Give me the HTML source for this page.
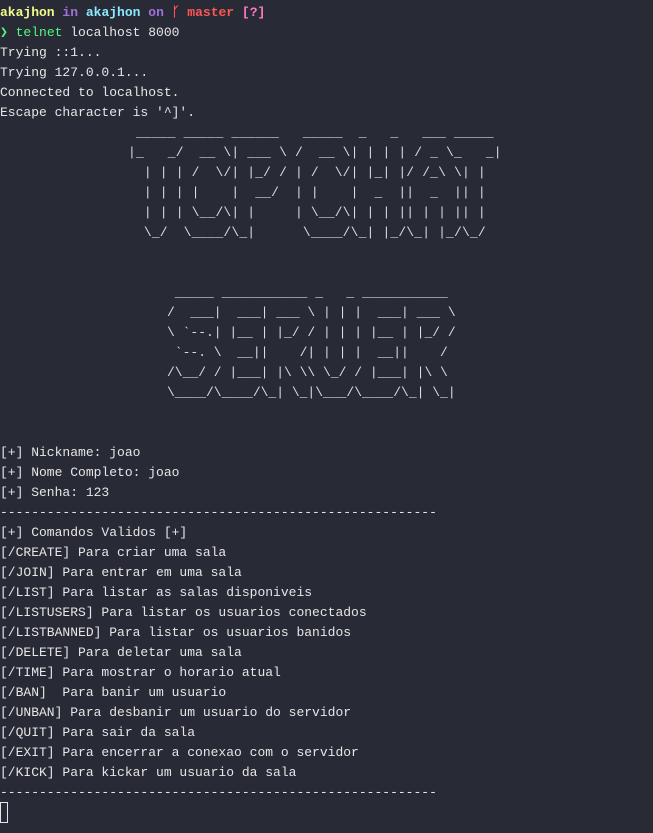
<!DOCTYPE html>
<html><head><meta charset="utf-8">
<style>
html,body{margin:0;padding:0;background:#282a36;}
body{width:653px;height:833px;overflow:hidden;position:relative;
font-family:"Liberation Mono","DejaVu Sans Mono",monospace;font-size:13px;color:#e6e6e6;}
pre{margin:0;font:inherit;line-height:20px;white-space:pre;position:absolute;}
.y{color:#f1fa8c;font-weight:bold}
.p{color:#a070d8;font-weight:bold}
.c{color:#8be9fd;font-weight:bold}
.r{color:#ff5555;font-weight:bold}
.k{color:#ff79c6;font-weight:bold}
.g{color:#50fa7b}
.cur{position:absolute;left:0;top:802px;width:6px;height:19px;border:1px solid #e6e6e6;}
</style></head><body>
<pre style="left:0;top:3px"><span class="y">akajhon</span> <span class="p">in</span> <span class="c">akajhon</span> <span class="p">on</span> <span class="r">ᚴ master</span> <span class="k">[?]</span>
<span class="g">❯ telnet</span> localhost 8000
Trying ::1...
Trying 127.0.0.1...
Connected to localhost.
Escape character is '^]'.</pre>
<pre style="left:128px;top:123px;color:#dcdcdc;letter-spacing:0.15px"> _____ _____ ______   _____  _   _   ___ _____ 
|_   _/  __ \| ___ \ /  __ \| | | | / _ \_   _|
  | | | /  \/| |_/ / | /  \/| |_| |/ /_\ \| |  
  | | | |    |  __/  | |    |  _  ||  _  || |  
  | | | \__/\| |     | \__/\| | | || | | || |  
  \_/  \____/\_|      \____/\_| |_/\_| |_/\_/  </pre>
<pre style="left:167px;top:283px;color:#dcdcdc"> _____ ___________ _   _ ___________ 
/  ___|  ___| ___ \ | | |  ___| ___ \
\ `--.| |__ | |_/ / | | | |__ | |_/ /
 `--. \  __||    /| | | |  __||    / 
/\__/ / |___| |\ \\ \_/ / |___| |\ \ 
\____/\____/\_| \_|\___/\____/\_| \_|</pre>
<pre style="left:0;top:443px">[+] Nickname: joao
[+] Nome Completo: joao
[+] Senha: 123
--------------------------------------------------------
[+] Comandos Validos [+]
[/CREATE] Para criar uma sala
[/JOIN] Para entrar em uma sala
[/LIST] Para listar as salas disponiveis
[/LISTUSERS] Para listar os usuarios conectados
[/LISTBANNED] Para listar os usuarios banidos
[/DELETE] Para deletar uma sala
[/TIME] Para mostrar o horario atual
[/BAN]  Para banir um usuario
[/UNBAN] Para desbanir um usuario do servidor
[/QUIT] Para sair da sala
[/EXIT] Para encerrar a conexao com o servidor
[/KICK] Para kickar um usuario da sala
--------------------------------------------------------</pre>
<div class="cur"></div>
</body></html>
